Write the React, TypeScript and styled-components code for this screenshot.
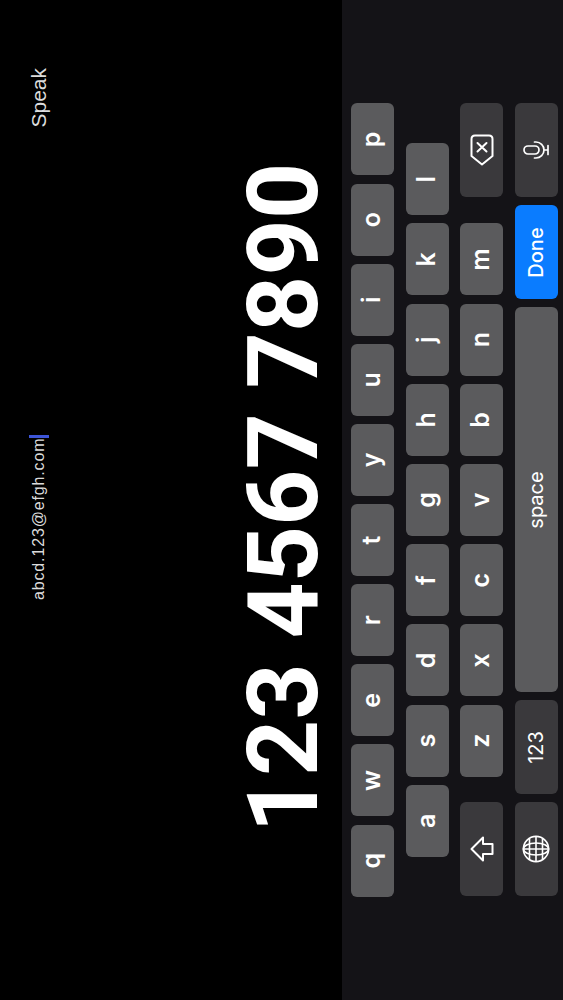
import React from "react";
import styled, { createGlobalStyle } from "styled-components";

const topRow = ["q", "w", "e", "r", "t", "y", "u", "i", "o", "p"];
const middleRow = ["a", "s", "d", "f", "g", "h", "j", "k", "l"];
const bottomRow = ["z", "x", "c", "v", "b", "n", "m"];

const ShiftIcon = () => (
  <svg width="26" height="24" viewBox="0 0 26 24" fill="none" stroke="#fff" strokeWidth="2" strokeLinejoin="round">
    <path d="M13 1.5 L24.5 13 H18 V22.5 H8 V13 H1.5 Z" />
  </svg>
);

const BackspaceIcon = () => (
  <svg width="32" height="24" viewBox="0 0 32 24" fill="none" stroke="#fff" strokeWidth="2" strokeLinejoin="round" strokeLinecap="round">
    <path d="M10 1.5 H27 Q30.5 1.5 30.5 5 V19 Q30.5 22.5 27 22.5 H10 L1.5 12 Z" />
    <path d="M14.5 7.5 L23 16.5 M23 7.5 L14.5 16.5" />
  </svg>
);

const GlobeIcon = () => (
  <svg width="28" height="28" viewBox="0 0 28 28" fill="none" stroke="#fff" strokeWidth="1.6">
    <circle cx="14" cy="14" r="12.6" />
    <ellipse cx="14" cy="14" rx="6" ry="12.6" />
    <path d="M14 1.4 V26.6 M1.4 14 H26.6 M3.4 7.5 H24.6 M3.4 20.5 H24.6" />
  </svg>
);

const MicIcon = () => (
  <svg width="18" height="26" viewBox="0 0 18 26" fill="none" stroke="#fff" strokeWidth="1.7" strokeLinecap="round">
    <rect x="5" y="1" width="8" height="15" rx="4" />
    <path d="M1 11.5 V13 A8 8 0 0 0 17 13 V11.5 M9 21 V25 M4.5 25 H13.5" />
  </svg>
);

const App = () => {
  return (
    <Viewport>
      <GlobalStyles />
      <Screen>
        <Display>
          <EntryBar>
            <Email>
              abcd.123@efgh.com
              <Caret />
            </Email>
            <Speak>Speak</Speak>
          </EntryBar>
          <BigNumber>123 4567 7890</BigNumber>
        </Display>
        <Keyboard>
          <KeyRow>
            {topRow.map((k) => (
              <LetterKey key={k}>{k}</LetterKey>
            ))}
          </KeyRow>
          <KeyRow>
            {middleRow.map((k) => (
              <LetterKey key={k}>{k}</LetterKey>
            ))}
          </KeyRow>
          <ThirdRow>
            <FnKey>
              <ShiftIcon />
            </FnKey>
            <Letters>
              {bottomRow.map((k) => (
                <LetterKey key={k}>{k}</LetterKey>
              ))}
            </Letters>
            <FnKey>
              <BackspaceIcon />
            </FnKey>
          </ThirdRow>
          <FourthRow>
            <FnKey>
              <GlobeIcon />
            </FnKey>
            <FnKey $label>123</FnKey>
            <SpaceKey>space</SpaceKey>
            <DoneKey>Done</DoneKey>
            <FnKey>
              <MicIcon />
            </FnKey>
          </FourthRow>
        </Keyboard>
      </Screen>
    </Viewport>
  );
};

const GlobalStyles = createGlobalStyle`
  html, body {
    margin: 0;
    padding: 0;
    background: #000;
    overflow: hidden;
  }
`;

const Viewport = styled.div`
  width: 563px;
  height: 1000px;
  overflow: hidden;
`;

// the phone is held sideways, so the whole page is turned a quarter
const Screen = styled.div`
  width: 1000px;
  height: 563px;
  display: flex;
  flex-direction: column;
  transform-origin: top left;
  transform: rotate(-90deg) translateX(-1000px);
  font-family: "Liberation Sans", Arial, sans-serif;
  color: #fff;
`;

const Display = styled.div`
  height: 342px;
  background: #000;
  display: flex;
  flex-direction: column;
`;

const EntryBar = styled.div`
  display: flex;
  align-items: center;
  height: 38px;
  margin-top: 20px;
  padding: 0 68px 0 400px;
`;

const Email = styled.div`
  display: flex;
  align-items: center;
  font-size: 16px;
  letter-spacing: 0.85px;
  color: #dcdcdc;
`;

const Caret = styled.span`
  width: 3px;
  height: 20px;
  background: #3d55d8;
`;

const Speak = styled.div`
  margin-left: auto;
  font-size: 21px;
  color: #dcdcdc;
`;

const BigNumber = styled.div`
  margin-top: 176px;
  text-align: center;
  padding-left: 5px;
  font-family: Roboto, "Liberation Sans", sans-serif;
  font-size: 98px;
  line-height: 100px;
  font-weight: 700;
  letter-spacing: 0.2px;
  white-space: nowrap;
`;

const Keyboard = styled.div`
  flex: 1;
  background: #141317;
  display: flex;
  flex-direction: column;
  align-items: center;
  gap: 11.5px;
  padding: 9px 103.5px 0;
`;

const KeyRow = styled.div`
  display: flex;
  justify-content: center;
  gap: 8.2px;
  width: 100%;
`;

const ThirdRow = styled(KeyRow)`
  justify-content: space-between;
  gap: 0;
`;

const Letters = styled.div`
  display: flex;
  gap: 8.2px;
`;

const FourthRow = styled(KeyRow)`
  justify-content: space-between;
  gap: 8px;
`;

const Key = styled.div`
  height: 43px;
  border-radius: 6px;
  display: flex;
  align-items: center;
  justify-content: center;
`;

const LetterKey = styled(Key)`
  width: 72px;
  background: #5b5b5d;
  font-family: Inter, sans-serif;
  font-size: 25px;
  font-weight: 600;
  padding-bottom: 3px;
  box-sizing: border-box;
`;

const FnKey = styled(Key)<{ $label?: boolean }>`
  width: 94px;
  background: #3a393c;
  font-family: Inter, sans-serif;
  font-size: ${(p) => (p.$label ? "20px" : "inherit")};
`;

const SpaceKey = styled(Key)`
  flex: 1;
  background: #5b5b5d;
  font-family: Inter, sans-serif;
  font-size: 20px;
`;

const DoneKey = styled(Key)`
  width: 94px;
  background: #0a7cff;
  font-family: Inter, sans-serif;
  font-size: 20px;
  font-weight: 500;
`;

export default App;
